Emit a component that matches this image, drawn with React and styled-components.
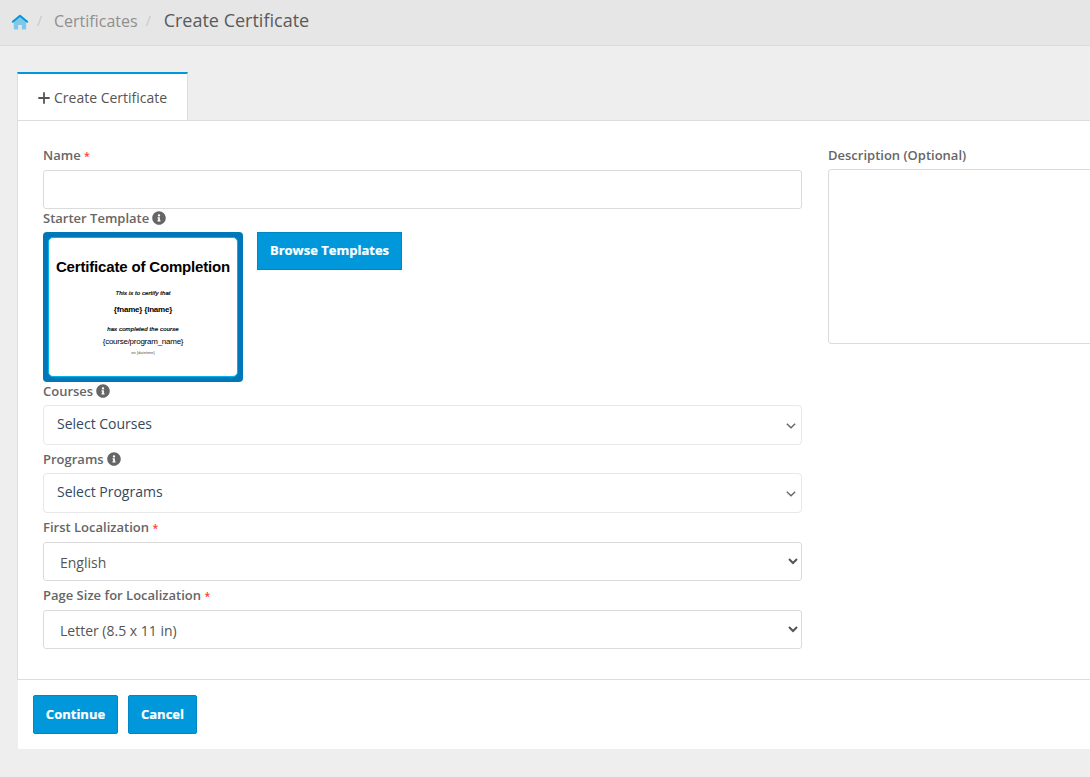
import React from 'react'
import styled, { createGlobalStyle } from 'styled-components'
import { FaInfoCircle } from 'react-icons/fa'

const GlobalStyle = createGlobalStyle`
    * {
        box-sizing: border-box;
    }
    body {
        margin: 0;
        background: #eeeeee;
        color: #555555;
        font-family: 'Open Sans', 'Liberation Sans', sans-serif;
        font-size: 14px;
        overflow: hidden;
    }
`;

const Page = styled.div`
    min-height: 777px;
    overflow: hidden;
`;

const Breadcrumb = styled.nav`
    display: flex;
    align-items: center;
    height: 46px;
    padding: 0 0 4px 11px;
    background: #e6e6e6;
    border-bottom: 1px solid #dadada;
`;

const HomeIcon = styled.svg`
    display: block;
    width: 18px;
    height: 16px;
    margin-top: 2px;
`;

const Separator = styled.span`
    width: 6px;
    margin: 0 11px 0 8px;
    font-size: 14px;
    color: #c8c8c8;
`;

const Crumb = styled.a`
    margin-left: ${({ $current }) => ($current ? '1px' : '0')};
    padding-bottom: ${({ $current }) => ($current ? '2px' : '0')};
    font-size: ${({ $current }) => ($current ? '18px' : '16px')};
    line-height: 24px;
    color: ${({ $current }) => ($current ? '#5a5a5a' : '#8f8f8f')};
    white-space: nowrap;
`;

const Content = styled.main`
    width: 1140px;
    padding: 26px 0 0 17px;
`;

const Tab = styled.div`
    display: flex;
    align-items: center;
    width: 171px;
    height: 48px;
    padding: 2px 0 0 20px;
    background: #ffffff;
    border: 1px solid #dddddd;
    border-top: 2px solid #0098da;
    border-bottom: 0;
    line-height: 20px;
    white-space: nowrap;
`;

const PlusIcon = styled.svg`
    display: block;
    width: 12px;
    height: 12px;
    margin-right: 4px;
`;

const Panel = styled.form`
    display: grid;
    grid-template-columns: 759px 300px;
    column-gap: 26px;
    height: 560px;
    padding: 25px 0 0 25px;
    background: #ffffff;
    border: 1px solid #dddddd;
    border-right: 0;
`;

const Column = styled.div`
    display: flex;
    flex-direction: column;
`;

const Field = styled.div`
    display: flex;
    flex-direction: column;
    gap: ${({ $gap }) => $gap || 5}px;
    margin-bottom: ${({ $space }) => $space || 0}px;
`;

const Label = styled.label`
    display: flex;
    align-items: center;
    height: 18px;
    font-size: 13px;
    font-weight: 600;
    line-height: 18px;
    color: #666666;
    white-space: nowrap;

    svg {
        margin-left: 3px;
    }
`;

const Required = styled.span`
    margin-left: 3.4px;
    padding-top: 1px;
    color: #ff3b30;
    font-size: 10.5px;
    font-weight: 600;
`;

const Input = styled.input`
    width: 100%;
    height: 39px;
    padding: 6px 12px;
    border: 1px solid #dbdbdb;
    border-radius: 3px;
    background: #ffffff;
    outline: none;
`;

const TextArea = styled.textarea`
    display: block;
    width: 100%;
    height: 175px;
    border: 1px solid #dbdbdb;
    border-radius: 3px;
    background: #ffffff;
    outline: none;
    resize: none;
`;

const Select = styled.select`
    width: 100%;
    height: 39px;
    padding: 8px 0 6px 12px;
    border: 1px solid #dbdbdb;
    border-radius: 3px;
    background: #ffffff;
    color: #555555;
    font-family: inherit;
    font-size: 14px;
`;

const MultiSelect = styled.div`
    display: flex;
    align-items: center;
    justify-content: space-between;
    height: 40px;
    padding: 0 5px 2px 13px;
    border: 1px solid #e8e8e8;
    border-radius: 4px;
    color: #34495e;
    line-height: 20px;

    svg {
        display: block;
        margin-top: 4px;
    }
`;

const TemplateRow = styled.div`
    display: flex;
    align-items: flex-start;
    gap: 14px;
`;

const Thumbnail = styled.div`
    width: 200px;
    height: 150px;
    padding: 5px;
    border-radius: 4px;
    background: #0077b9;
`;

const Certificate = styled.div`
    display: flex;
    flex-direction: column;
    align-items: center;
    height: 140px;
    padding-top: 8px;
    border: 1px solid #00b4ea;
    border-radius: 5px;
    background: #ffffff;
    color: #000000;
    font-family: 'Liberation Sans', Arial, sans-serif;
    white-space: nowrap;
`;

const CertLine = styled.div`
    height: ${({ $height }) => $height}px;
    line-height: ${({ $height }) => $height}px;
    font-size: ${({ $size }) => $size}px;
    font-weight: ${({ $bold }) => ($bold ? 700 : 400)};
    font-style: ${({ $italic }) => ($italic ? 'italic' : 'normal')};
    color: ${({ $color }) => $color || '#000000'};
    letter-spacing: ${({ $spacing }) => $spacing || 0}px;
    -webkit-text-stroke: ${({ $italic }) => ($italic ? '0.2px #000000' : '0')};
`;

const Button = styled.button`
    width: ${({ $width }) => $width}px;
    height: ${({ $height }) => $height || 39}px;
    padding: 0 0 2px;
    border: 1px solid #0088c4;
    border-radius: ${({ $square }) => ($square ? 0 : '2px')};
    background: #0098da;
    color: #ffffff;
    font-family: inherit;
    font-size: 13px;
    font-weight: 700;
    line-height: 18px;
    white-space: nowrap;
    -webkit-text-stroke: 0.2px #ffffff;
`;

const Footer = styled.div`
    display: flex;
    gap: 10px;
    height: 69px;
    margin-left: 1px;
    padding: 15px;
    background: #ffffff;
`;

const Chevron = () => (
    <svg width="10" height="6" viewBox="0 0 10 6" fill="none" stroke="#666666" strokeWidth="1.4">
        <path d="M0.8 0.7L5 4.7L9.2 0.7" />
    </svg>
)

const FieldLabel = ({ text, required, info }) => (
    <Label>
        {text}
        {required && <Required>*</Required>}
        {info && <FaInfoCircle size={14} color="#666666" />}
    </Label>
)

const App = () => {
    return (
        <>
            <GlobalStyle />
            <Page>
                <Breadcrumb>
                    <HomeIcon viewBox="0 0 18 16">
                        <path d="M2.8 7.5L9 2.5L15.2 7.5V14.4Q15.2 15.4 14.2 15.4H10.8V11H7.2V15.4H3.8Q2.8 15.4 2.8 14.4Z" fill="#80c8e8" />
                        <path d="M1.8 7.8L9 1.8L16.2 7.8" fill="none" stroke="#0098da" strokeWidth="1.9" strokeLinecap="round" strokeLinejoin="round" />
                    </HomeIcon>
                    <Separator>/</Separator>
                    <Crumb>Certificates</Crumb>
                    <Separator>/</Separator>
                    <Crumb $current>Create Certificate</Crumb>
                </Breadcrumb>
                <Content>
                    <Tab>
                        <PlusIcon viewBox="0 0 12 12" stroke="#555555" strokeWidth="1.8" strokeLinecap="round">
                            <path d="M6 1V11M1 6H11" />
                        </PlusIcon>
                        Create Certificate
                    </Tab>
                    <Panel>
                        <Column>
                            <Field $gap={6}>
                                <FieldLabel text="Name" required />
                                <Input />
                            </Field>
                            <Field>
                                <FieldLabel text="Starter Template" info />
                                <TemplateRow>
                                    <Thumbnail>
                                        <Certificate>
                                            <CertLine $height={42} $size={15} $bold $spacing={-0.17}>Certificate of Completion</CertLine>
                                            <CertLine $height={10} $size={6} $italic $spacing={0.08}>This is to certify that</CertLine>
                                            <CertLine $height={24} $size={8} $bold $spacing={-0.2}>{'{fname} {lname}'}</CertLine>
                                            <CertLine $height={14} $size={6} $italic $spacing={0.12}>has completed the course</CertLine>
                                            <CertLine $height={12} $size={8} $spacing={-0.25}>{'{course/program_name}'}</CertLine>
                                            <CertLine $height={9} $size={4} $color="#555555">on {'{datetime}'}</CertLine>
                                        </Certificate>
                                    </Thumbnail>
                                    <Button type="button" $width={145} $height={38} $square>Browse Templates</Button>
                                </TemplateRow>
                            </Field>
                            <Field $space={5}>
                                <FieldLabel text="Courses" info />
                                <MultiSelect>Select Courses<Chevron /></MultiSelect>
                            </Field>
                            <Field $space={5}>
                                <FieldLabel text="Programs" info />
                                <MultiSelect>Select Programs<Chevron /></MultiSelect>
                            </Field>
                            <Field $gap={6} $space={5}>
                                <FieldLabel text="First Localization" required />
                                <Select><option>English</option></Select>
                            </Field>
                            <Field $gap={6}>
                                <FieldLabel text="Page Size for Localization" required />
                                <Select><option>Letter (8.5 x 11 in)</option></Select>
                            </Field>
                        </Column>
                        <Column>
                            <Field>
                                <FieldLabel text="Description (Optional)" />
                                <TextArea />
                            </Field>
                        </Column>
                    </Panel>
                    <Footer>
                        <Button type="button" $width={85}>Continue</Button>
                        <Button type="button" $width={69}>Cancel</Button>
                    </Footer>
                </Content>
            </Page>
        </>
    )
}

export default App;
